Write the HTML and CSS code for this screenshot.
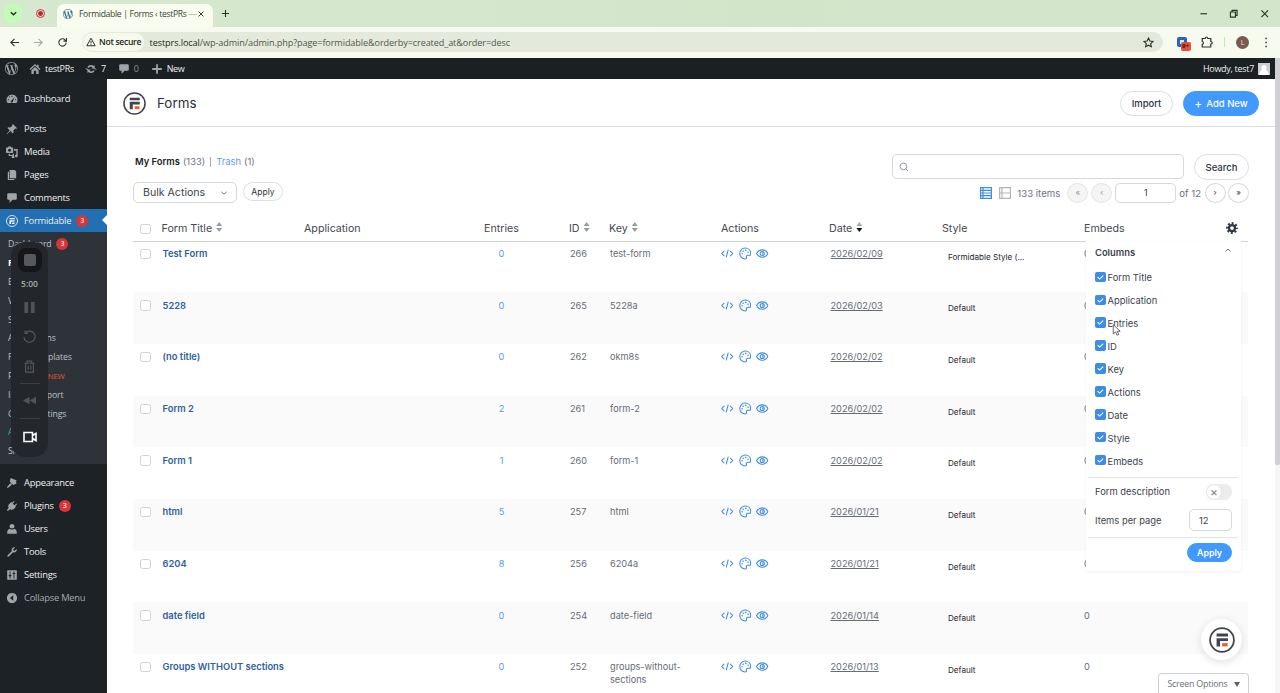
FILE: index.html
```html
<!DOCTYPE html>
<html lang="en">
<head>
  <meta charset="UTF-8" />
  <meta name="viewport" content="width=device-width, initial-scale=1.0" />
  <title>Formidable | Forms ‹ testPRs</title>
  <link rel="stylesheet" href="styles.css">
</head>
<body>
  <svg class="sprite">
    <symbol id="wp" viewBox="0 0 24 24"><path fill="currentColor" d="M21.469 6.825c.84 1.537 1.318 3.3 1.318 5.175 0 3.979-2.156 7.456-5.363 9.325l3.295-9.527c.615-1.54.82-2.771.82-3.864 0-.405-.026-.78-.07-1.11m-7.981.105c.647-.03 1.232-.105 1.232-.105.582-.075.514-.93-.067-.899 0 0-1.755.135-2.88.135-1.064 0-2.85-.15-2.85-.15-.585-.03-.661.855-.075.885 0 0 .54.061 1.125.09l1.68 4.605-2.37 7.08L5.354 6.9c.649-.03 1.234-.1 1.234-.1.585-.075.516-.93-.065-.896 0 0-1.746.138-2.874.138-.2 0-.438-.008-.69-.015C4.911 3.15 8.235 1.215 12 1.215c2.809 0 5.365 1.072 7.286 2.833-.046-.003-.091-.009-.141-.009-1.06 0-1.812.923-1.812 1.914 0 .89.513 1.643 1.06 2.531.411.72.89 1.643.89 2.977 0 .915-.354 1.994-.821 3.479l-1.075 3.585-3.9-11.61.001.014zM12 22.784c-1.059 0-2.081-.153-3.048-.437l3.237-9.406 3.315 9.087c.024.053.05.101.078.149-1.12.393-2.325.609-3.582.609M1.211 12c0-1.564.336-3.05.935-4.39L7.29 21.709C3.694 19.96 1.212 16.271 1.211 12M12 0C5.385 0 0 5.385 0 12s5.385 12 12 12 12-5.385 12-12S18.615 0 12 0"/></symbol>
    <symbol id="frm" viewBox="0 0 24 24"><circle cx="12" cy="12" r="11" fill="none" stroke="currentColor" stroke-width="1.6"/><path fill="currentColor" d="M7 6h10.5v2.7H7zM7 10.3h10.5V13h-7.3v5H7z"/><path class="frm-dot" d="M12.2 14.9h5v3h-5z"/></symbol>
    <symbol id="comment" viewBox="0 0 20 20"><path fill="currentColor" d="M4 2h12q2 0 2 2v7q0 2-2 2h-5l-5 5v-5H4q-2 0-2-2V4q0-2 2-2z"/></symbol>
    <symbol id="code" viewBox="0 0 24 24"><path d="M6.500 7l-5 5 5 5M17.500 7l5 5-5 5M14 4.500l-4 15"/></symbol>
    <symbol id="palette" viewBox="0 0 24 24"><path d="M12 1.500a10.500 10.500 0 1 0 0 21c2 0 2.800-1.300 2.300-2.800-.8-2.500.5-4.200 2.700-4.200h3.300c1.500 0 2.200-1.500 2.200-3.500C22.500 6 18 1.500 12 1.500z"/><g fill="currentColor" stroke="none"><circle cx="6" cy="12.500" r="1.500"/><circle cx="8" cy="7.800" r="1.500"/><circle cx="13" cy="6" r="1.500"/><circle cx="17.500" cy="9.500" r="1.500"/></g></symbol>
    <symbol id="eye" viewBox="0 0 24 24"><path d="M1 12c2.500-4.700 6.500-7 11-7s8.500 2.300 11 7c-2.500 4.700-6.500 7-11 7S3.500 16.700 1 12z"/><circle cx="12" cy="12" r="4"/><path d="M12 10.500a1.500 1.500 0 0 1 0 3"/></symbol>
    <symbol id="gear" viewBox="0 0 24 24"><g fill="none" stroke="currentColor"><circle cx="12" cy="12" r="6" stroke-width="4.500"/><circle cx="12" cy="12" r="9.800" stroke-width="4" stroke-dasharray="4 3.697" stroke-dashoffset="2"/></g></symbol>
  </svg>

  <div class="tabstrip">
    <span class="tab-search"><svg viewBox="0 0 10 10"><path d="M2 3.500l3 3 3-3"/></svg></span>
    <span class="rec"></span>
    <div class="tab">
      <svg class="fav"><use href="#wp"/></svg>
      <span class="tab-title">Formidable | Forms ‹ testPRs <i>—</i></span>
      <svg class="x" viewBox="0 0 10 10"><path d="M2 2l6 6M8 2l-6 6"/></svg>
    </div>
    <svg class="plus" viewBox="0 0 10 10"><path d="M5 1v8M1 5h8"/></svg>
    <div class="win">
      <svg viewBox="0 0 10 10"><path d="M1.500 5h7"/></svg>
      <svg viewBox="0 0 10 10"><path d="M1.500 3.200h5.300v5.300H1.500zM3.200 3V1.500h5.300v5.300H7"/></svg>
      <svg viewBox="0 0 10 10"><path d="M1.500 1.500l7 7M8.500 1.500l-7 7"/></svg>
    </div>
  </div>

  <div class="toolbar">
    <svg viewBox="0 0 12 12"><path d="M11 6H2M6 2L2 6l4 4"/></svg>
    <svg class="off" viewBox="0 0 12 12"><path d="M1 6h9M6 2l4 4-4 4"/></svg>
    <svg viewBox="0 0 12 12"><path d="M10 6a4 4 0 1 1-1.200-2.900L10.300 4.500M10.300 1v3.500H7"/></svg>
    <div class="omni">
      <span class="secure"><svg viewBox="0 0 12 12"><path d="M6 1.500L11 10.500H1zM6 4.800v2.700M6 8.500v1"/></svg>Not secure</span>
      <span class="url">testprs.local<i>/wp-admin/admin.php?page=formidable&amp;orderby=created_at&amp;order=desc</i></span>
      <svg class="star" viewBox="0 0 12 12"><path d="M6 1.200l1.500 3.200 3.500.4-2.600 2.400.7 3.500L6 9l-3.100 1.700.7-3.500L1 4.800l3.500-.4z"/></svg>
    </div>
    <span class="ext"><b>9+</b></span>
    <svg class="puzzle" viewBox="0 0 12 12"><path d="M1.200 2.500h3q.3-1.500 1.300-1.500t1.300 1.500h3v3q1.500.3 1.500 1.300t-1.500 1.300v2.900H1.200V8.500q1.200-.3 1.200-1.500T1.200 5.300z"/></svg>
    <span class="bar"></span>
    <span class="me">L</span>
    <svg class="dots" viewBox="0 0 4 12"><path d="M1.300.8h1.600v1.600H1.300zM1.300 5.200h1.600v1.600H1.300zM1.300 9.600h1.600v1.600H1.300z"/></svg>
  </div>

  <div class="viewport">
    <div class="page">
      <div class="adminbar">
        <svg class="wp-logo"><use href="#wp"/></svg>
        <svg class="home" viewBox="0 0 20 20"><path d="M10 1.500L1 10l1.500 1.500L10 4.500l7.500 7L19 10l-3-2.800V3h-2.500v1.800zM4 12l6-5.500 6 5.500v6.500h-4V13H8v5.500H4z"/></svg>
        <span class="site">testPRs</span>
        <svg class="upd" viewBox="0 0 20 20"><path d="M10.200 3.300c1.600 0 3.200.6 4.300 1.700L16 3.500V9h-5.500l1.900-1.900a3.800 3.800 0 0 0-6 .9L3.800 7.200a7 7 0 0 1 6.400-3.900zM0 9h3.500L6 11.500H4zM9.800 16.700a6.500 6.500 0 0 1-4.300-1.700L4 16.500V11h5.500l-1.900 1.900a3.800 3.800 0 0 0 6-.9l2.600.8a7 7 0 0 1-6.400 3.900zM20 11h-3.500L14 8.500h2z"/></svg>
        <span class="n7">7</span>
        <svg class="cm"><use href="#comment"/></svg>
        <span class="n0">0</span>
        <svg class="add" viewBox="0 0 20 20"><path d="M8.500 2h3v6.500H18v3h-6.500V18h-3v-6.500H2v-3h6.500z"/></svg>
        <span>New</span>
        <span class="howdy">Howdy, test7</span>
        <svg class="avatar" viewBox="0 0 12 12"><path fill="#cdcbd3" d="M0 0h12v12H0z"/><path fill="#fff" d="M6 2a2.600 2.600 0 0 1 1.700 4.600Q10.500 8 10.500 12h-9q0-4 2.800-5.400A2.600 2.600 0 0 1 6 2z"/></svg>
      </div>

      <div class="main">
        <nav class="menu">
          <a class="item dash"><svg viewBox="0 0 20 20"><path fill-rule="evenodd" d="M10 2.500a9 9 0 0 1 7.500 14h-15A9 9 0 0 1 10 2.500zM9.200 4.500v2h1.600v-2zM5 6.300l1.300 1.300 1-1L6 5.300zM3 10.500V12h2v-1.500zM15 10.500V12h2v-1.500zM14.500 6.500L9.300 12.300a1.800 1.800 0 1 0 2.200 1.500z"/></svg>Dashboard</a>
          <a class="item"><svg viewBox="0 0 20 20"><path d="M10.400 3l1-1.500L18.500 8.600 17 9.600l-1.500-.3-3.200 3.200.3 3.500-1.300 1.300-3.800-3.800L2 18.500l-.8-.7 5-5.500-3.800-3.800L3.700 7.200l3.500.3 3.500-3.200z"/></svg>Posts</a>
          <a class="item"><svg viewBox="0 0 20 20"><path fill-rule="evenodd" d="M1 2.500h2L4 1h4l1 1.500h2q1 0 1 1v7q0 1-1 1H1q-1 0-1-1v-7q0-1 1-1zM6 4.500a2.500 2.500 0 1 0 .01 0zM13.500 5H19.500v11.500a2.300 2.300 0 1 1-2.300-2.200V8h-3.700zM4.500 13h2.300v2h4.200v-2h2.300v4a2.300 2.300 0 1 1-2.300-.5H4.500z"/></svg>Media</a>
          <a class="item"><svg viewBox="0 0 20 20"><path d="M6 1.500h8.500L17 4v11.500H6zM3 4.500h2v12h9v2H3z"/></svg>Pages</a>
          <a class="item"><svg><use href="#comment"/></svg>Comments</a>
          <a class="item on"><svg class="frm-ico"><use href="#frm"/></svg>Formidable <b>3</b></a>
          <div class="sub">
            <a>Dashboard <b>3</b></a>
            <a class="cur">Forms</a>
            <a>Entries</a>
            <a>Views</a>
            <a>Styles</a>
            <a>Applications</a>
            <a>Form Templates</a>
            <a>Payments <em>NEW</em></a>
            <a>Import/Export</a>
            <a>Global Settings</a>
            <a class="green">Add-Ons</a>
            <a>SMTP</a>
            <div class="recorder">
              <span class="stop"></span>
              <span class="time">5:00</span>
              <svg class="i-pause" viewBox="0 0 14 14"><path d="M1.500 1h4v12h-4zM8.500 1h4v12h-4z"/></svg>
              <svg class="ln" viewBox="0 0 14 14"><path d="M2.500 3.200A6 6 0 1 1 1 7.500M2.300.5v3.200h3.200"/></svg>
              <svg class="ln" viewBox="0 0 14 14"><path d="M1.500 3.500h11M4.500 3.500V1.200h5v2.300M2.800 3.500v9.500h8.400V3.500M5.600 6v4.500M8.400 6v4.500"/></svg>
              <hr>
              <svg class="i-rew" viewBox="0 0 14 14"><path d="M7 3v8L0 7zM14 3v8L7 7z"/></svg>
              <hr>
              <svg class="cam" viewBox="0 0 14 14"><path d="M1 2.500h8.500v9H1zM9.500 5.500l3.500-2v7l-3.500-2"/></svg>
            </div>
          </div>
          <a class="item gap"><svg viewBox="0 0 20 20"><path d="M7 3l2-1 9 4-1.500 1.500 1 3.500L12 13.500 9.500 11 8.800 13.800 3 18.500 1.500 17l4.700-5.800L9 10.500 6.500 8z"/></svg>Appearance</a>
          <a class="item"><svg viewBox="0 0 20 20"><path d="M13 1.500l1.300 1.300-3 3.200 2.800 2.800 3.200-3 1.200 1.200-3 3.200 1 1L13 15q-3 2.500-6 .5L3 18.500 1.500 17l3-4Q2.500 10 5 7l4-3.500 1 1z"/></svg>Plugins <b>3</b></a>
          <a class="item"><svg viewBox="0 0 20 20"><path d="M10 1.500a4 4 0 0 1 2.500 7.200h-5A4 4 0 0 1 10 1.500zM6 9.500q4 3 8 0 4 1.500 4 6V18H2v-2.500q0-4.500 4-6z"/></svg>Users</a>
          <a class="item"><svg viewBox="0 0 20 20"><path d="M16.700 9.300c-1.500 1.500-3.500 1.700-5 1l-7 7.200q-1 .8-2 0t0-2L9.800 8.400c-.8-1.700-.6-3.700.8-5.100 1.300-1.300 3-1.600 4.600-1l-3 3 .3 2.200 2.200.3 3-3c.6 1.500.3 3.200-1 4.500z"/></svg>Tools</a>
          <a class="item"><svg viewBox="0 0 20 20"><path fill-rule="evenodd" d="M3 2h14q1 0 1 1v14q0 1-1 1H3q-1 0-1-1V3q0-1 1-1zM6 4v6H4.500v2H6v4h1.500v-4H9v-2H7.500V4zM12.500 4v2.500H11v2h1.500V16H14V8.500h1.500v-2H14V4z"/></svg>Settings</a>
          <a class="item fold"><svg viewBox="0 0 20 20"><path fill-rule="evenodd" d="M10 1.500a8.500 8.500 0 1 1-.01 0zM12 5.500v9L6.500 10z"/></svg>Collapse Menu</a>
        </nav>

        <div class="body">
          <header>
            <svg class="logo"><use href="#frm"/></svg>
            <h1>Forms</h1>
            <a class="btn import">Import</a>
            <a class="btn blue new"><i>+</i> Add New</a>
          </header>

          <div class="content">
            <div class="top">
              <div class="left">
                <p class="views"><strong>My Forms</strong> (133) <s></s> <a>Trash</a> (1)</p>
                <div class="bulk">
                  <span class="select">Bulk Actions <svg viewBox="0 0 8 8"><path d="M1.500 3L4 5.200 6.500 3"/></svg></span>
                  <a class="btn sm">Apply</a>
                </div>
              </div>
              <div class="right">
                <div class="search">
                  <span class="field"><svg viewBox="0 0 12 12"><circle cx="5.300" cy="5.300" r="4"/><path d="M8.300 8.300l2.700 2.700"/></svg></span>
                  <a class="btn">Search</a>
                </div>
                <div class="pages">
                  <svg class="list" viewBox="0 0 12 12"><path d="M.6.6h10.800v10.800H.6zM.6 3.300h10.800M.6 6h10.800M.6 8.700h10.800M3 .6v10.800"/></svg>
                  <svg class="excerpt" viewBox="0 0 12 12"><path d="M.6.6h10.800v10.800H.6zM.6 6h10.800M3 .6v10.800"/></svg>
                  <span class="count">133 items</span>
                  <span class="pg dis">«</span>
                  <span class="pg dis">‹</span>
                  <span class="cur-page">1</span>
                  <span class="of">of 12</span>
                  <span class="pg">›</span>
                  <span class="pg">»</span>
                </div>
              </div>
            </div>

            <div class="table">
              <div class="row head">
                <span><i class="cb"></i></span>
                <span>Form Title<i class="sort"></i></span>
                <span>Application</span>
                <span>Entries</span>
                <span>ID<i class="sort"></i></span>
                <span>Key<i class="sort"></i></span>
                <span>Actions</span>
                <span>Date<i class="sort desc"></i></span>
                <span>Style</span>
                <span>Embeds</span>
                <svg class="gear"><use href="#gear"/></svg>
              </div>
              <div id="rows"></div>
            </div>

            <div class="panel">
              <div class="panel-head">Columns <svg viewBox="0 0 8 8"><path d="M1.500 5.500L4 3l2.500 2.500"/></svg></div>
              <div id="cols"></div>
              <div class="opt line">Form description <span class="toggle"><i>×</i></span></div>
              <div class="opt">Items per page <span class="num">12</span></div>
              <div class="foot"><a class="btn blue">Apply</a></div>
            </div>
          </div>
        </div>
      </div>

      <div class="fab"><svg><use href="#frm"/></svg></div>
      <div class="screen-options">Screen Options <i></i></div>
      <svg class="cursor" viewBox="0 0 12 16"><path d="M1.500 1.500v11.300l2.700-2.500 1.900 4 2-.9-1.900-3.900h3.600z"/></svg>
    </div>
    <div class="scroll"><i></i></div>
  </div>

  <script>
    const forms = [
      ['Test Form', 0, 266, 'test-form', '2026/02/09', 'Formidable Style (...'],
      ['5228', 0, 265, '5228a', '2026/02/03', 'Default'],
      ['(no title)', 0, 262, 'okm8s', '2026/02/02', 'Default'],
      ['Form 2', 2, 261, 'form-2', '2026/02/02', 'Default'],
      ['Form 1', 1, 260, 'form-1', '2026/02/02', 'Default'],
      ['html', 5, 257, 'html', '2026/01/21', 'Default'],
      ['6204', 8, 256, '6204a', '2026/01/21', 'Default'],
      ['date field', 0, 254, 'date-field', '2026/01/14', 'Default'],
      ['Groups WITHOUT sections', 0, 252, 'groups-without-sections', '2026/01/13', 'Default']
    ];
    const columns = ['Form Title', 'Application', 'Entries', 'ID', 'Key', 'Actions', 'Date', 'Style', 'Embeds'];

    document.getElementById('rows').innerHTML = forms.map(f => `
      <div class="row">
        <span><i class="cb"></i></span>
        <span class="title">${f[0]}</span>
        <span></span>
        <span class="entries">${f[1]}</span>
        <span class="id">${f[2]}</span>
        <span class="key">${f[3]}</span>
        <span class="acts"><svg><use href="#code"/></svg><svg><use href="#palette"/></svg><svg><use href="#eye"/></svg></span>
        <span class="date"><u>${f[4]}</u></span>
        <span class="style">${f[5]}</span>
        <span>0</span>
      </div>`).join('');

    document.getElementById('cols').innerHTML = columns.map(c =>
      `<div class="col"><svg viewBox="0 0 10 10"><path d="M2.500 5l2 1.800L7.800 3.500"/></svg>${c}</div>`).join('');
  </script>
</body>
</html>
```
FILE: styles.css
```css
* {
  box-sizing: border-box;
}
body {
  margin: 0;
  height: 693px;
  overflow: hidden;
  display: flex;
  flex-direction: column;
  font-family: "Open Sans", sans-serif;
  background: #fff;
}
i, em {
  font-style: normal;
}
svg {
  flex: none;
}
.sprite {
  position: absolute;
  width: 0;
  height: 0;
}

/* browser */
.tabstrip {
  height: 27px;
  flex: none;
  display: flex;
  align-items: center;
  background: linear-gradient(90deg, #d6e8cf, #d3e5c9 60%, #d3e6cc);
  position: relative;
}
.tabstrip svg, .toolbar svg {
  fill: none;
  stroke: #2b3327;
  stroke-width: 1.2;
}
.tab-search {
  width: 18px;
  height: 19px;
  margin-left: 4px;
  border-radius: 6px;
  background: #c3fbb8;
  display: flex;
  align-items: center;
  justify-content: center;
}
.tab-search svg {
  width: 9px;
  height: 9px;
  stroke-width: 1.6;
}
.rec {
  width: 9px;
  height: 9px;
  margin-left: 13.5px;
  border-radius: 50%;
  border: 1px solid #c5373c;
  background: radial-gradient(circle, #c5262c 42%, #ecd8cf 52%);
}
.tab {
  width: 156px;
  height: 23px;
  margin: 4px 0 0 12.5px;
  padding: 0 8px 4px 6px;
  border-radius: 7px 7px 0 0;
  background: #f7fcef;
  display: flex;
  align-items: center;
  font-size: 8.6px;
  letter-spacing: -.32px;
  color: #3a4236;
}
.tab .fav {
  width: 10px;
  height: 10px;
  margin-right: 6px;
  color: #2c6a92;
  stroke: none;
}
.tab-title {
  flex: 1;
  white-space: nowrap;
}
.tab-title i {
  opacity: .4;
}
.tab .x {
  width: 8px;
  height: 8px;
}
.plus {
  width: 9px;
  height: 9px;
  margin-left: 8px;
}
.win {
  margin-left: auto;
  margin-right: 11px;
  display: flex;
  gap: 21px;
}
.win svg {
  width: 9.5px;
  height: 9.5px;
}
.toolbar {
  height: 31px;
  flex: none;
  display: flex;
  align-items: center;
  padding: 0 12px 1px 9px;
  background: #f7fbef;
}
.toolbar > svg {
  width: 11px;
  height: 11px;
  margin-right: 13px;
}
.toolbar > .off {
  opacity: .4;
}
.omni {
  width: 1081px;
  height: 20px;
  margin-left: 1px;
  padding: 0 9px 0 1px;
  border-radius: 10px;
  background: #e4eadb;
  display: flex;
  align-items: center;
  font-size: 9.1px;
  letter-spacing: -.09px;
  color: #222820;
}
.secure {
  height: 18px;
  width: 61px;
  padding-left: 3px;
  border-radius: 9px;
  background: #f6faee;
  display: flex;
  align-items: center;
  white-space: nowrap;
  font-size: 8.6px;
  letter-spacing: -.3px;
  font-weight: 600;
}
.secure svg {
  width: 10px;
  height: 10px;
  margin-right: 3px;
}
.url {
  margin-left: 5.5px;
}
.url i {
  color: #50564c;
}
.star {
  width: 11px;
  height: 11px;
  margin-left: auto;
}
.ext {
  width: 10px;
  height: 10px;
  margin-left: 14px;
  border-radius: 2px;
  background: radial-gradient(circle, #dce8fa 30%, #2563c4 36%);
  position: relative;
}
.ext b {
  position: absolute;
  left: 4px;
  top: 5px;
  width: 10px;
  height: 9px;
  border-radius: 2px;
  background: #e5503b;
  color: #35100a;
  font-size: 6px;
  line-height: 9px;
  text-align: center;
}
.toolbar > .puzzle {
  margin: 0 0 0 14px;
  width: 12px;
  height: 12px;
}
.bar {
  width: 1.5px;
  height: 10px;
  margin-left: 11px;
  background: #c0ecb8;
}
.me {
  width: 13px;
  height: 13px;
  margin-left: 11px;
  border-radius: 50%;
  background: #7c594e;
  color: #f1e5df;
  font-size: 7px;
  line-height: 13px;
  text-align: center;
}
.toolbar > .dots {
  width: 4px;
  height: 11px;
  margin: 0 0 0 15px;
  fill: #2b3327;
  stroke: none;
}

/* wordpress shell */
.viewport {
  flex: 1;
  min-height: 0;
  display: flex;
}
.page {
  width: 1275px;
  display: flex;
  flex-direction: column;
  position: relative;
  overflow: hidden;
}
.scroll {
  width: 5px;
  background: #f6f6f7;
}
.scroll i {
  display: block;
  height: 407px;
  background: #cfcfd4;
  border-radius: 0 0 2px 2px;
}
.adminbar {
  height: 21px;
  flex: none;
  padding: 0 5px 0 5px;
  background: #1b2023;
  display: flex;
  align-items: center;
  font-size: 9px;
  letter-spacing: -.3px;
  color: #eef0f1;
}
.adminbar svg {
  width: 12px;
  height: 12px;
  fill: #9fa5aa;
  color: #9fa5aa;
}
.adminbar .wp-logo {
  width: 13px;
  height: 13px;
  margin-right: 11px;
}
.site {
  margin: 0 11px 0 4px;
}
.n7 {
  margin: 0 12px 0 4px;
}
.n0 {
  margin: 0 12px 0 4px;
  color: #8c9196;
}
.add {
  margin-right: 4px;
}
.howdy {
  margin-left: auto;
  margin-right: 4px;
}
.main {
  flex: 1;
  min-height: 0;
  display: flex;
}
.menu {
  width: 107px;
  flex: none;
  padding-top: 8px;
  background: #1d2226;
}
.item {
  height: 23px;
  padding-left: 6px;
  display: flex;
  align-items: center;
  font-size: 9.4px;
  letter-spacing: -.25px;
  color: #eceef0;
}
.item svg {
  width: 12px;
  height: 12px;
  margin-right: 6px;
  fill: #a0a5aa;
  color: #a0a5aa;
}
.item.dash {
  margin-bottom: 7px;
}
.item.gap {
  margin-top: 7px;
}
.item.fold {
  color: #a7aaad;
}
.item b, .sub b {
  width: 12px;
  height: 12px;
  margin-left: 5px;
  border-radius: 50%;
  background: #d63638;
  color: #fff;
  font-size: 7px;
  font-weight: 400;
  letter-spacing: 0;
  line-height: 12px;
  text-align: center;
}
.item.on {
  background: #226fb2;
  position: relative;
}
.item.on:after {
  content: "";
  position: absolute;
  right: 0;
  top: 6px;
  border: 5.5px solid transparent;
  border-right-color: #fff;
  border-left: 0;
}
.item .frm-ico {
  color: #fff;
  overflow: visible;
}
.frm-ico {
  --dot: #fff;
}
.frm-dot {
  fill: var(--dot, #f15a29);
}
.sub {
  height: 232px;
  padding: 3px 0 0 8px;
  background: #2d3339;
  position: relative;
}
.sub a {
  height: 18.8px;
  display: flex;
  align-items: center;
  font-size: 8.7px;
  letter-spacing: -.15px;
  color: #bcc1c5;
}
.sub em {
  margin-left: 1px;
  font-size: 7.8px;
  color: #e2533f;
}
.sub .cur {
  font-weight: 700;
  color: #fff;
}
.sub .green {
  color: #3fae74;
}
.recorder {
  position: absolute;
  left: 11px;
  top: 10px;
  width: 37px;
  height: 215px;
  border-radius: 14px;
  background: #23272c;
  display: flex;
  flex-direction: column;
  align-items: center;
}
.stop {
  width: 24px;
  height: 24px;
  margin-top: 6px;
  border: 6px solid #141619;
  border-radius: 8px;
  background: #56585b;
}
.time {
  height: 12px;
  margin: 6px 0 11px;
  font-size: 8.5px;
  line-height: 12px;
  font-weight: 600;
  color: #a9acaf;
}
.recorder svg {
  width: 13px;
  height: 13px;
  margin-bottom: 16.3px;
  fill: #505458;
}
.recorder .ln {
  fill: none;
  stroke: #55595d;
  stroke-width: 1.2;
}
.recorder hr {
  width: 20px;
  margin: -6px 0 10px;
  border: 0;
  border-top: 1px solid #3c4045;
}
.recorder .i-rew {
  margin-bottom: 17px;
}
.recorder .cam {
  width: 14px;
  height: 14px;
  margin: 1px 0 0;
  fill: none;
  stroke: #fff;
  stroke-width: 1.6;
}

/* formidable */
.body {
  flex: 1;
  font-family: Inter, sans-serif;
  color: #3c434d;
}
header {
  height: 48px;
  padding: 1px 16px 0;
  border-bottom: 1px solid #dedfe2;
  display: flex;
  align-items: center;
}
.logo {
  width: 23px;
  height: 23px;
  color: #41444f;
}
h1 {
  margin: 0 auto 0 11px;
  font-size: 13.4px;
  font-weight: 400;
  color: #2b303c;
}
.btn {
  height: 25px;
  padding: 0 10px;
  border: 1px solid #dcdee2;
  border-radius: 13px;
  display: inline-flex;
  align-items: center;
  justify-content: center;
  font-size: 9.5px;
  font-weight: 500;
  color: #2e3440;
  background: #fff;
}
.btn.blue {
  border-color: #4199fd;
  background: #4199fd;
  color: #fff;
}
.btn.new {
  width: 76px;
  margin-left: 10px;
  padding: 0;
}
.btn.new i {
  margin-right: 4px;
  font-size: 12px;
  font-weight: 400;
}
.import {
  width: 53px;
}
.btn.sm {
  width: 40px;
  height: 19px;
  padding: 0;
  font-size: 8.6px;
  font-weight: 400;
}
.content {
  padding: 0 27px 0 26px;
  position: relative;
}
.top {
  height: 89px;
  display: flex;
  justify-content: space-between;
}
.views {
  margin: 28px 0 13px 2px;
  height: 14px;
  line-height: 14px;
  font-size: 9.4px;
  color: #6b7280;
  display: flex;
  gap: 3px;
}
.views strong {
  font-weight: 600;
  color: #1a1d24;
}
.views s {
  width: 1px;
  height: 10px;
  margin: 2px 2px 0 2px;
  background: #aaa;
}
.views a {
  color: #5f9fe0;
}
.bulk {
  display: flex;
  gap: 6px;
}
.select {
  width: 104px;
  height: 21px;
  padding: 0 8px 0 9px;
  border: 1px solid #d5d8dd;
  border-radius: 5px;
  display: flex;
  align-items: center;
  justify-content: space-between;
  font-size: 10.6px;
}
.select svg, .panel-head svg {
  width: 8px;
  height: 8px;
  fill: none;
  stroke: #6b7280;
}
.right {
  padding-top: 27px;
}
.search {
  margin-right: -1px;
  display: flex;
  justify-content: flex-end;
  gap: 10px;
}
.search .btn {
  width: 55px;
  height: 26px;
}
.field {
  width: 292px;
  height: 25px;
  padding: 7px 6px;
  border: 1px solid #d5d8dd;
  border-radius: 5px;
}
.field svg {
  display: block;
  width: 10px;
  height: 10px;
  fill: none;
  stroke: #7b828e;
}
.pages {
  height: 20px;
  margin: 3px -1px 0 0;
  display: flex;
  align-items: center;
  justify-content: flex-end;
  font-size: 9.6px;
  color: #6b7280;
}
.pages svg {
  width: 12px;
  height: 12px;
  margin-right: 7px;
  fill: none;
  stroke: #3b8ee8;
  stroke-width: 1.2;
}
.pages .excerpt {
  margin-right: 6px;
  stroke: #b4b6ba;
}
.count {
  margin-right: 7px;
}
.pg {
  width: 21px;
  height: 20px;
  border: 1px solid #d5d8dd;
  border-radius: 50%;
  margin-left: 2.5px;
  font-size: 8px;
  line-height: 17px;
  text-align: center;
  color: #33383f;
}
.pg.dis {
  margin: 0 3px 0 0;
  background: #f5f5f6;
  border-color: #e4e5e8;
  color: #8f949c;
}
.cur-page {
  width: 61px;
  height: 20px;
  border: 1px solid #d5d8dd;
  border-radius: 5px;
  line-height: 18px;
  text-align: center;
  color: #3c434d;
}
.of {
  margin: 0 1px 0 3px;
}
#rows {
  margin-top: -1.3px;
}
.row {
  height: 51.65px;
  padding: 6.5px 0 0 7px;
  display: grid;
  grid-template-columns: 21.5px 142.5px 180px 85px 40px 112px 108px 113px 142px 142px 22px;
  font-size: 9.2px;
  line-height: 13px;
  color: #666c75;
}
.row:nth-child(even) {
  background: #fafafa;
}
.row.head {
  height: 26px;
  padding-top: 6px;
  border-bottom: 1px solid #cfd1d4;
  font-size: 10.7px;
  color: #434952;
}
.head span {
  white-space: nowrap;
}
.cb {
  display: block;
  width: 10.5px;
  height: 10.5px;
  margin-top: 1.5px;
  border: 1px solid #cfd2d7;
  border-radius: 2.5px;
  background: #fff;
}
.sort {
  display: inline-block;
  width: 6px;
  height: 10px;
  margin-left: 4px;
  background: #9a9ca0;
  clip-path: polygon(50% 0, 100% 40%, 0 40%, 0 60%, 100% 60%, 50% 100%, 0 60%, 0 40%);
}
.sort.desc {
  background: linear-gradient(#aaa 50%, #111 50%);
}
.gear {
  width: 12px;
  height: 12px;
  color: #2e3440;
}
.title {
  padding-left: 1px;
  font-size: 9.35px;
  font-weight: 600;
  color: #2f5f9e;
  white-space: nowrap;
}
.entries {
  width: 35px;
  text-align: center;
  color: #5b9be4;
}
.id {
  padding-left: 1px;
}
.key {
  padding-left: 1px;
  width: 85px;
}
.acts {
  display: flex;
  gap: 5px;
}
.acts svg {
  width: 12.5px;
  height: 13px;
  fill: none;
  stroke: #3a8be0;
  stroke-width: 2;
  color: #3a8be0;
}
.date {
  padding-left: 1.5px;
}
.date u {
  text-underline-offset: 1px;
}
.style {
  padding: 3.5px 0 0 6px;
  font-size: 8.1px;
  color: #23272e;
}
.panel {
  position: absolute;
  left: 979px;
  top: 114px;
  width: 155px;
  height: 330px;
  background: #fff;
  box-shadow: 0 1px 3px rgba(0, 0, 0, .05);
  font-size: 9.4px;
  line-height: 13px;
}
.panel-head {
  height: 25px;
  padding: 4.5px 9px 0;
  display: flex;
  justify-content: space-between;
  font-weight: 600;
}
.col {
  height: 22.9px;
  padding: 1px 0 0 9px;
  display: flex;
  align-items: center;
}
.col svg {
  width: 10.5px;
  height: 10.5px;
  margin: -2px 2px 0 0;
  border-radius: 2px;
  background: #3c8de8;
  fill: none;
  stroke: #fff;
}
.opt {
  height: 30px;
  margin-left: 2px;
  margin-right: 3px;
  padding: 0 6px 0 7px;
  display: flex;
  align-items: center;
  justify-content: space-between;
}
.opt.line {
  height: 28px;
  margin-top: 5px;
  border-top: 1px solid #e4e5e8;
}
.toggle {
  width: 26px;
  height: 16px;
  border-radius: 8px;
  background: #ececed;
}
.toggle i {
  display: block;
  width: 16px;
  height: 16px;
  border: 1px solid #e6e6e8;
  border-radius: 50%;
  background: #fff;
  line-height: 14px;
  text-align: center;
  font-size: 12px;
  color: #7b808a;
}
.num {
  width: 43px;
  height: 22px;
  padding-left: 9px;
  border: 1px solid #d5d8dd;
  border-radius: 5px;
  line-height: 21px;
}
.foot {
  margin: 2px 3px 0 2px;
  padding: 5px 6px 0;
  border-top: 1px solid #e4e5e8;
  text-align: right;
}
.foot .btn {
  width: 45px;
  height: 19px;
  padding: 0;
  font-size: 8.8px;
  font-weight: 600;
}

/* floating */
.fab {
  position: absolute;
  left: 1201px;
  top: 561px;
  width: 41px;
  height: 41px;
  border-radius: 50%;
  background: #fff;
  box-shadow: 0 2px 8px rgba(0, 0, 0, .13);
  display: flex;
  align-items: center;
  justify-content: center;
}
.fab svg {
  width: 26px;
  height: 26px;
  color: #41444f;
}
.screen-options {
  position: absolute;
  left: 1158px;
  top: 615px;
  width: 91px;
  height: 21px;
  border: 1px solid #cfd1d5;
  border-bottom: 0;
  border-radius: 4px 4px 0 0;
  background: #fff;
  display: flex;
  align-items: center;
  justify-content: center;
  gap: 6px;
  font-size: 8.8px;
  letter-spacing: -.18px;
  color: #6b6f75;
}
.screen-options i {
  border: 3px solid transparent;
  border-top: 5px solid #5d6167;
  border-bottom: 0;
}
.cursor {
  position: absolute;
  left: 1112px;
  top: 265px;
  width: 10px;
  height: 14px;
  fill: #fff;
  stroke: #444a55;
}
```
